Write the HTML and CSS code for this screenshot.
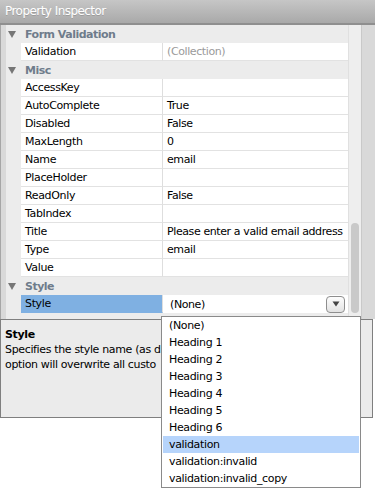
FILE: index.html
```html
<!DOCTYPE html>
<html lang="en">
<head>
  <meta charset="UTF-8" />
  <title>Property Inspector</title>
  <link rel="stylesheet" href="styles.css">
</head>
<body>

  <div class="inspector">
    <div class="titlebar">Property Inspector</div>

    <div class="panel">
      <div class="grid">
        <div class="section"><span class="arrow"></span>Form Validation</div>
        <div class="row"><div class="name">Validation</div><div class="value muted">(Collection)</div></div>

        <div class="section"><span class="arrow"></span>Misc</div>
        <div class="row"><div class="name">AccessKey</div><div class="value"></div></div>
        <div class="row"><div class="name">AutoComplete</div><div class="value">True</div></div>
        <div class="row"><div class="name">Disabled</div><div class="value">False</div></div>
        <div class="row"><div class="name">MaxLength</div><div class="value">0</div></div>
        <div class="row"><div class="name">Name</div><div class="value">email</div></div>
        <div class="row"><div class="name">PlaceHolder</div><div class="value"></div></div>
        <div class="row"><div class="name">ReadOnly</div><div class="value">False</div></div>
        <div class="row"><div class="name">TabIndex</div><div class="value"></div></div>
        <div class="row"><div class="name">Title</div><div class="value">Please enter a valid email address</div></div>
        <div class="row"><div class="name">Type</div><div class="value">email</div></div>
        <div class="row"><div class="name">Value</div><div class="value"></div></div>

        <div class="section"><span class="arrow"></span>Style</div>
        <div class="row selected">
          <div class="name">Style</div>
          <div class="value select">
            <span>(None)</span>
            <span class="select-btn">
              <svg width="8" height="6" viewBox="0 0 8 6"><path d="M0.5 0.5 L7.5 0.5 L4 5.5 Z" fill="#444"/></svg>
            </span>
            <ul class="options">
              <li>(None)</li>
              <li>Heading 1</li>
              <li>Heading 2</li>
              <li>Heading 3</li>
              <li>Heading 4</li>
              <li>Heading 5</li>
              <li>Heading 6</li>
              <li class="active">validation</li>
              <li>validation:invalid</li>
              <li>validation:invalid_copy</li>
            </ul>
          </div>
        </div>
      </div>

      <div class="scrollbar"><div class="thumb"></div></div>
    </div>

    <div class="desc">
      <div class="desc-title">Style</div>
      <div class="desc-text">
        <div class="desc-line">Specifies the style name (as d</div>
        <div class="desc-line">option will overwrite all custo</div>
      </div>
    </div>
  </div>

</body>
</html>
```

FILE: styles.css
```css
body {
  margin: 0;
  background: #fff;
  font-family: 'DejaVu Sans', sans-serif;
  font-size: 11px;
  letter-spacing: -0.35px;
  color: #000;
}

.inspector {
  width: 375px;
  min-height: 493px;
}

.titlebar {
  height: 23px;
  line-height: 23px;
  padding-left: 5px;
  font-size: 12px;
  letter-spacing: -0.55px;
  color: #fff;
  text-shadow: 0 1px 0 rgba(0,0,0,0.15);
  background: linear-gradient(#c6c6c6, #a9a9a9);
  border-bottom: 2px solid #8f8f8f;
}

.panel {
  display: flex;
  height: 294px;
  background: #d9d9d9;
  border-left: 1px solid #a6a6a6;
  padding-left: 5px;
}

.grid {
  width: 342px;
  background: #ececec;
}

.section {
  display: flex;
  align-items: center;
  height: 18px;
  padding-left: 2px;
  font-weight: bold;
  letter-spacing: -0.5px;
  color: #6f7c8b;
  background: #ececec;
}

.arrow {
  width: 0;
  height: 0;
  border-left: 4px solid transparent;
  border-right: 4px solid transparent;
  border-top: 7px solid #767676;
  margin-right: 9px;
}

.row {
  display: flex;
  height: 18px;
  margin-left: 15px;
  background: #fff;
}

.name, .value {
  box-sizing: border-box;
  height: 18px;
  line-height: 17px;
  border-bottom: 1px solid #e2e2e2;
}

.name {
  width: 142px;
  padding-left: 4px;
  border-right: 1px solid #dedede;
}

.value {
  flex: 1;
  padding-left: 4px;
  white-space: nowrap;
  letter-spacing: -0.4px;
}

.muted {
  color: #9a9a9a;
}

.selected .name {
  background: #7fb0e2;
  border-bottom-color: #7fb0e2;
}

.select {
  position: relative;
  display: flex;
  align-items: center;
  padding-left: 7px;
  border-bottom: none;
}

.select-btn {
  margin-left: auto;
  margin-right: 3px;
  width: 17px;
  height: 15px;
  display: flex;
  align-items: center;
  justify-content: center;
  border: 1px solid #8e8e8e;
  border-radius: 4px;
  background: linear-gradient(#fdfdfd, #e2e2e2);
}

.options {
  position: absolute;
  top: 21px;
  left: -2px;
  width: 196px;
  margin: 0;
  padding: 0 1px;
  list-style: none;
  letter-spacing: -0.35px;
  background: #fff;
  border: 1px solid #8a8a8a;
  z-index: 2;
}

.options li {
  height: 17px;
  line-height: 17px;
  padding-left: 6px;
}

.options li.active {
  background: #b6d4fb;
}

.scrollbar {
  width: 14px;
  background: #eeeeee;
  border-left: 1px solid #e0e0e0;
  border-right: 1px solid #c9c9c9;
  display: flex;
  flex-direction: column;
  justify-content: flex-end;
  padding-bottom: 6px;
  box-sizing: border-box;
}

.thumb {
  height: 90px;
  margin: 0 2px;
  border-radius: 5px;
  background: #c9c9c9;
}

.desc {
  box-sizing: border-box;
  width: 373px;
  height: 99px;
  padding: 7px 4px;
  background: #ebebeb;
  border: 1px solid #7f7f7f;
  line-height: 15px;
}

.desc-title {
  font-weight: bold;
}

/* the open dropdown covers the rest of the line */
.desc-text {
  width: 156px;
  overflow: hidden;
  white-space: nowrap;
}
```
